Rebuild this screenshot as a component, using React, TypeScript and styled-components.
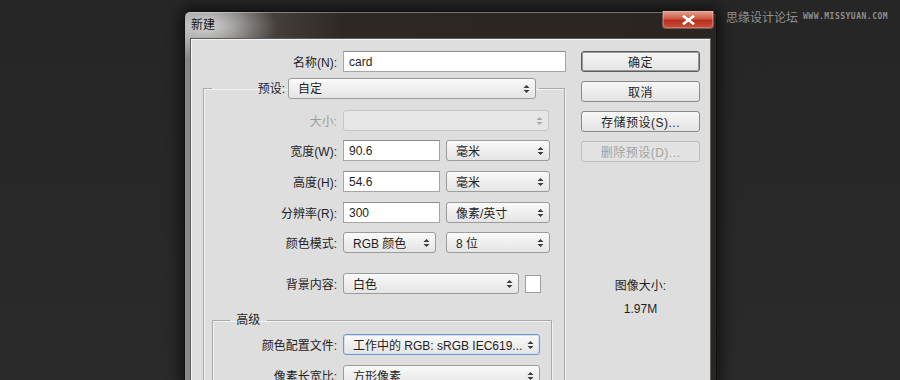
import styled, { createGlobalStyle, css } from 'styled-components'

const Global = createGlobalStyle`
  html, body { margin: 0; padding: 0; background: #282828; }
  body {
    font-family: "Liberation Sans", "Noto Sans CJK SC", sans-serif;
    font-size: 12px;
    color: #1e1e1e;
  }
`

const Screen = styled.div`
  width: 900px;
  height: 380px;
  overflow: hidden;
  display: flex;
  align-items: flex-start;
  background: linear-gradient(to bottom, #262626, #2a2a2a);
`

const Window = styled.div`
  margin: 11px 0 0 184px;
  width: 533px;
  flex: 0 0 auto;
  box-sizing: border-box;
  padding: 0 5px;
  display: flex;
  flex-direction: column;
  border: 1px solid #111;
  border-bottom: none;
  border-radius: 6px 6px 0 0;
  background:
    radial-gradient(ellipse 70px 34px at 22px 14px, rgba(215, 215, 215, 0.95), rgba(200, 200, 200, 0) 100%),
    linear-gradient(to right, #8c8a88 0, #4d4844 12%, #2e2824 30%, #2b2521 100%);
  box-shadow: 0 0 14px 4px rgba(0, 0, 0, 0.55), inset 0 1px 0 rgba(255, 255, 255, 0.35);
`

const TitleBar = styled.div`
  height: 26px;
  flex: 0 0 auto;
  display: flex;
  justify-content: space-between;
  align-items: flex-start;
`

const Title = styled.div`
  padding: 6px 0 0 1px;
  font-size: 12px;
  line-height: 14px;
  color: #141414;
`

const CloseButton = styled.div`
  width: 50px;
  height: 17px;
  margin-right: -3px;
  margin-top: -1px;
  display: flex;
  align-items: center;
  justify-content: center;
  border: 1px solid #6e5a55;
  border-top: none;
  border-radius: 0 0 4px 4px;
  background: linear-gradient(to bottom, #e3a595 0, #cf5a43 45%, #b8301f 55%, #c8503a 100%);
  box-shadow: inset 0 0 0 1px rgba(255, 200, 190, 0.35);
`

const Content = styled.div`
  display: flex;
  padding: 12px 0 40px;
  background: #dedede;
  border: 1px solid #5d5d5d;
  border-bottom: none;
  box-shadow: inset 1px 1px 0 #f4f4f4;
`

const LeftCol = styled.div`
  width: 390px;
  flex: 0 0 auto;
  display: flex;
  flex-direction: column;
`

const RightCol = styled.div`
  width: 119px;
  display: flex;
  flex-direction: column;
  gap: 9px;
`

const Row = styled.div<{ $top?: number }>`
  display: flex;
  align-items: center;
  height: 21px;
  margin-top: ${p => p.$top ?? 0}px;
`

const Label = styled.span<{ $w: number; $disabled?: boolean; $gap?: number }>`
  width: ${p => p.$w}px;
  margin-right: ${p => p.$gap ?? 6}px;
  text-align: right;
  white-space: nowrap;
  color: ${p => (p.$disabled ? '#9c9c9c' : '#1e1e1e')};
`

const TextBox = styled.div<{ $w: number }>`
  width: ${p => p.$w}px;
  height: 21px;
  box-sizing: border-box;
  padding-left: 5px;
  display: flex;
  align-items: center;
  background: #fff;
  border: 1px solid #a5a5a5;
  border-top-color: #8c8c8c;
`

const Dropdown = styled.div<{ $w: number; $disabled?: boolean; $focus?: boolean; $ml?: number }>`
  width: ${p => p.$w}px;
  height: 21px;
  margin-left: ${p => p.$ml ?? 0}px;
  box-sizing: border-box;
  padding: 0 5px 0 9px;
  display: flex;
  align-items: center;
  justify-content: space-between;
  border-radius: 3px;
  white-space: nowrap;
  border: 1px solid #9b9b9b;
  background: linear-gradient(to bottom, #fafafa 0, #efefef 50%, #e4e4e4 100%);
  ${p =>
    p.$disabled &&
    css`
      border-color: #c6c6c6;
      background: #e6e6e6;
      color: #a0a0a0;
    `}
  ${p =>
    p.$focus &&
    css`
      border-color: #6f98c8;
      box-shadow: inset 0 0 0 1px #cfe0f2;
    `}
`

const Swatch = styled.div`
  width: 16px;
  height: 18px;
  margin-left: 6px;
  box-sizing: border-box;
  background: #fff;
  border: 1px solid #9d9d9d;
`

const GroupBox = styled.fieldset<{ $ml: number; $mr: number; $top: number }>`
  margin: ${p => p.$top}px ${p => p.$mr}px 0 ${p => p.$ml}px;
  padding: 0 0 60px 0;
  min-width: 0;
  border: 1px solid #aaaaaa;
  box-shadow: 1px 1px 0 #f2f2f2, inset 1px 1px 0 #f2f2f2;
`

const Legend = styled.legend<{ $ml: number }>`
  margin-left: ${p => p.$ml}px;
  padding: 0 3px;
  line-height: 16px;
`

const LegendRow = styled.div`
  display: flex;
  align-items: center;
  height: 21px;
`

const Button = styled.div<{ $primary?: boolean; $disabled?: boolean }>`
  height: 21px;
  box-sizing: border-box;
  display: flex;
  align-items: center;
  justify-content: center;
  border-radius: 3px;
  border: 1px solid #8a8a8a;
  background: linear-gradient(to bottom, #f7f7f7 0, #ededed 50%, #e3e3e3 100%);
  letter-spacing: 0.5px;
  ${p =>
    p.$primary &&
    css`
      border-color: #5c5c5c;
      box-shadow: inset 0 0 0 1px #9a9a9a;
    `}
  ${p =>
    p.$disabled &&
    css`
      border-color: #bcbcbc;
      background: #e2e2e2;
      color: #a2a2a2;
    `}
`

const Info = styled.div`
  margin-top: 107px;
  display: flex;
  flex-direction: column;
  align-items: center;
  gap: 7px;
  line-height: 16px;
`

const Watermark = styled.div`
  margin: 8px 0 0 9px;
  display: flex;
  align-items: center;
  gap: 5px;
  color: #8e8e8e;
  white-space: nowrap;
`

const MarkCn = styled.span`
  font-family: "Noto Sans CJK SC", sans-serif;
  font-size: 12px;
`

const MarkEn = styled.span`
  font-family: "DejaVu Sans Mono", monospace;
  font-size: 8px;
  font-weight: bold;
  letter-spacing: 0.5px;
`

const Arrows = ({ disabled }: { disabled?: boolean }) => (
  <svg width="7" height="10" viewBox="0 0 7 10">
    <polygon points="0.5,4 3.5,1 6.5,4" fill={disabled ? '#a8a8a8' : '#3a3a3a'} />
    <polygon points="0.5,6 3.5,9 6.5,6" fill={disabled ? '#a8a8a8' : '#3a3a3a'} />
  </svg>
)

const Close = () => (
  <svg width="13" height="10" viewBox="0 0 13 10">
    <path d="M2 1.5 L11 8.5 M11 1.5 L2 8.5" stroke="#fff" strokeWidth="2.6" strokeLinecap="square" />
  </svg>
)

const Select = (props: {
  w: number
  text?: string
  disabled?: boolean
  focus?: boolean
  ml?: number
}) => (
  <Dropdown $w={props.w} $disabled={props.disabled} $focus={props.focus} $ml={props.ml}>
    <span>{props.text}</span>
    <Arrows disabled={props.disabled} />
  </Dropdown>
)

export default function App() {
  return (
    <>
      <Global />
      <Screen>
        <Window>
          <TitleBar>
            <Title>新建</Title>
            <CloseButton>
              <Close />
            </CloseButton>
          </TitleBar>
          <Content>
            <LeftCol>
              <Row>
                <Label $w={146}>名称(N):</Label>
                <TextBox $w={223}>card</TextBox>
              </Row>

              <GroupBox $ml={12} $mr={16} $top={6}>
                <Legend $ml={8}>
                  <LegendRow>
                    <Label $w={70} $gap={3}>预设:</Label>
                    <Select w={248} text="自定" />
                  </LegendRow>
                </Legend>

                <Row $top={11}>
                  <Label $w={133} $disabled>大小:</Label>
                  <Select w={206} disabled />
                </Row>
                <Row $top={9}>
                  <Label $w={133}>宽度(W):</Label>
                  <TextBox $w={97}>90.6</TextBox>
                  <Select w={104} text="毫米" ml={6} />
                </Row>
                <Row $top={10}>
                  <Label $w={133}>高度(H):</Label>
                  <TextBox $w={97}>54.6</TextBox>
                  <Select w={104} text="毫米" ml={6} />
                </Row>
                <Row $top={10}>
                  <Label $w={133}>分辨率(R):</Label>
                  <TextBox $w={97}>300</TextBox>
                  <Select w={104} text="像素/英寸" ml={6} />
                </Row>
                <Row $top={9}>
                  <Label $w={133}>颜色模式:</Label>
                  <Select w={93} text="RGB 颜色" />
                  <Select w={104} text="8 位" ml={10} />
                </Row>
                <Row $top={20}>
                  <Label $w={133}>背景内容:</Label>
                  <Select w={176} text="白色" />
                  <Swatch />
                </Row>

                <GroupBox $ml={8} $mr={12} $top={18}>
                  <Legend $ml={17}>&nbsp;高级&nbsp;</Legend>
                  <Row $top={6}>
                    <Label $w={124}>颜色配置文件:</Label>
                    <Select w={197} text="工作中的 RGB: sRGB IEC619..." focus />
                  </Row>
                  <Row $top={10}>
                    <Label $w={124}>像素长宽比:</Label>
                    <Select w={197} text="方形像素" />
                  </Row>
                </GroupBox>
              </GroupBox>
            </LeftCol>

            <RightCol>
              <Button $primary>确定</Button>
              <Button>取消</Button>
              <Button>存储预设(S)...</Button>
              <Button $disabled>删除预设(D)...</Button>
              <Info>
                <span>图像大小:</span>
                <span>1.97M</span>
              </Info>
            </RightCol>
          </Content>
        </Window>
        <Watermark>
          <MarkCn>思缘设计论坛</MarkCn>
          <MarkEn>WWW.MISSYUAN.COM</MarkEn>
        </Watermark>
      </Screen>
    </>
  )
}
